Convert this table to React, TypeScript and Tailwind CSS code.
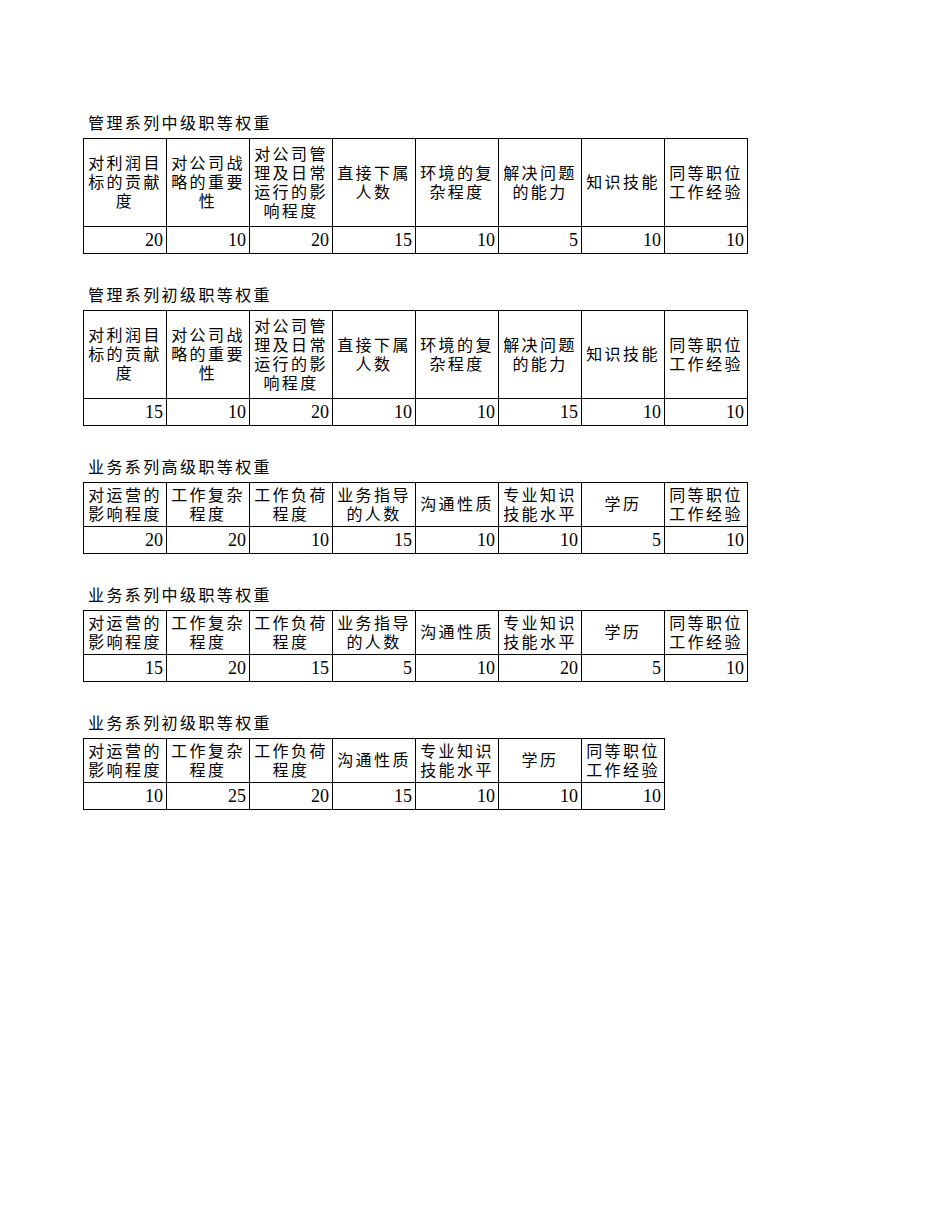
const font = "font-['Liberation_Serif','Noto_Sans_CJK_SC',serif]";

interface WeightTable {
  title: string;
  headers: string[];
  values: number[];
  tall?: boolean;
}

const tables: WeightTable[] = [
  {
    title: "管理系列中级职等权重",
    headers: ["对利润目标的贡献度", "对公司战略的重要性", "对公司管理及日常运行的影响程度", "直接下属人数", "环境的复杂程度", "解决问题的能力", "知识技能", "同等职位工作经验"],
    values: [20, 10, 20, 15, 10, 5, 10, 10],
    tall: true,
  },
  {
    title: "管理系列初级职等权重",
    headers: ["对利润目标的贡献度", "对公司战略的重要性", "对公司管理及日常运行的影响程度", "直接下属人数", "环境的复杂程度", "解决问题的能力", "知识技能", "同等职位工作经验"],
    values: [15, 10, 20, 10, 10, 15, 10, 10],
    tall: true,
  },
  {
    title: "业务系列高级职等权重",
    headers: ["对运营的影响程度", "工作复杂程度", "工作负荷程度", "业务指导的人数", "沟通性质", "专业知识技能水平", "学历", "同等职位工作经验"],
    values: [20, 20, 10, 15, 10, 10, 5, 10],
  },
  {
    title: "业务系列中级职等权重",
    headers: ["对运营的影响程度", "工作复杂程度", "工作负荷程度", "业务指导的人数", "沟通性质", "专业知识技能水平", "学历", "同等职位工作经验"],
    values: [15, 20, 15, 5, 10, 20, 5, 10],
  },
  {
    title: "业务系列初级职等权重",
    headers: ["对运营的影响程度", "工作复杂程度", "工作负荷程度", "沟通性质", "专业知识技能水平", "学历", "同等职位工作经验"],
    values: [10, 25, 20, 15, 10, 10, 10],
  },
];

const Section = ({ title, headers, values, tall }: WeightTable) => (
  <div>
    <div className="h-[22px] leading-[22px] pl-[5px] mb-[3px] text-[16px] tracking-[2.4px] text-black">
      {title}
    </div>
    <table className="table-fixed border-collapse text-black">
      <colgroup>
        {headers.map((_, i) => (
          <col key={i} className="w-[83px]" />
        ))}
      </colgroup>
      <tbody>
        <tr className={tall ? "h-[88px]" : "h-[44px]"}>
          {headers.map((h, i) => (
            <td
              key={i}
              className="border border-black px-[3px] text-center align-middle text-[16px] leading-[19px] tracking-[2.4px]"
            >
              {h}
            </td>
          ))}
        </tr>
        <tr className="h-[27px]">
          {values.map((v, i) => (
            <td key={i} className="border border-black pr-[3px] text-right align-middle text-[18px] leading-[20px]">
              {v}
            </td>
          ))}
        </tr>
      </tbody>
    </table>
  </div>
);

export default function App() {
  return (
    <div className={`${font} w-[950px] min-h-[1230px] bg-white pl-[83px] pt-[113px] flex flex-col gap-[31px]`}>
      {tables.map((t, i) => (
        <Section key={i} {...t} />
      ))}
    </div>
  );
}
